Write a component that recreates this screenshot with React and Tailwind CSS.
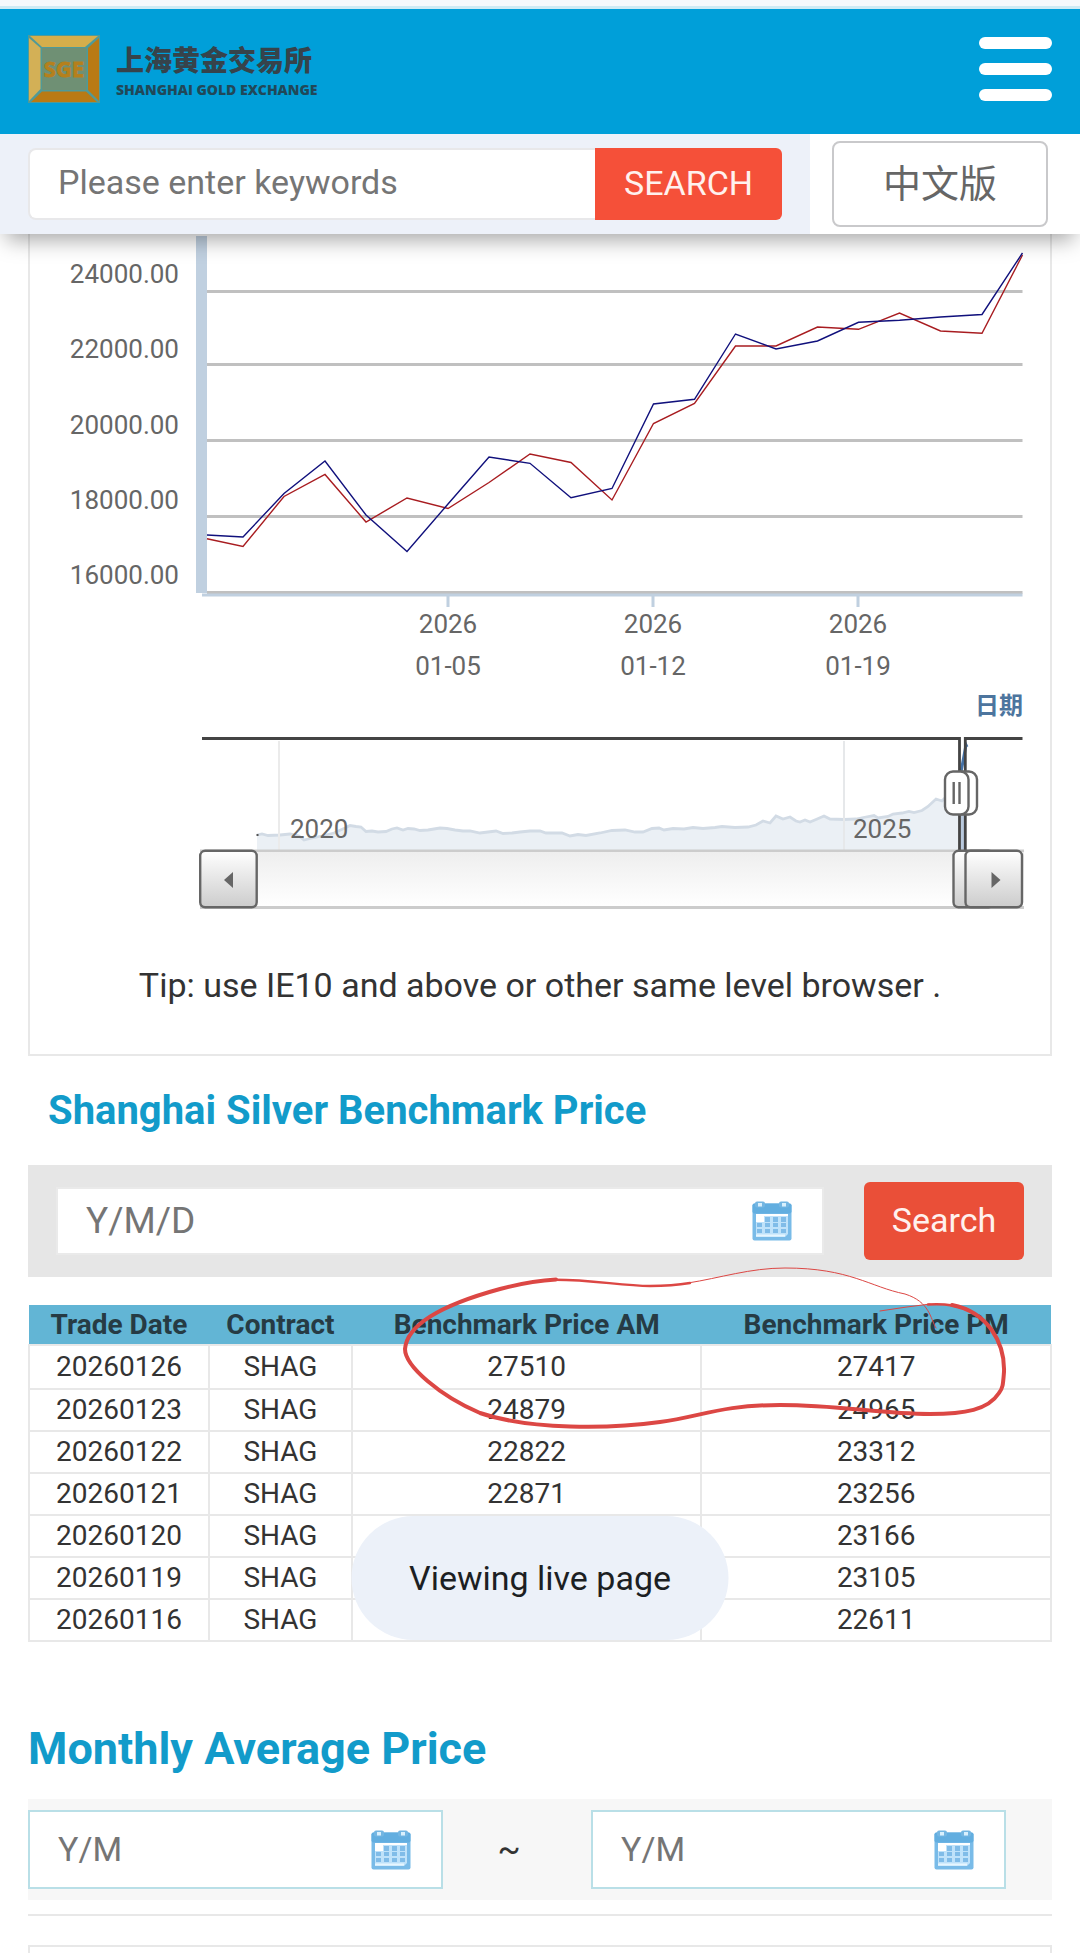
import React from 'react';

const AXIS_LABELS = [
  { text: '24000.00', y: 283, line: 291 },
  { text: '22000.00', y: 358, line: 364 },
  { text: '20000.00', y: 434, line: 440 },
  { text: '18000.00', y: 509, line: 516 },
  { text: '16000.00', y: 584, line: 592 },
];

const DATE_TICKS = [
  { x: 448, year: '2026', day: '01-05' },
  { x: 653, year: '2026', day: '01-12' },
  { x: 858, year: '2026', day: '01-19' },
];

const PM_POINTS =
  '207,535 243,537 284,493.5 325,461 366,515 407,551.5 448,504 489,457 530,463.3 571,497.7 612,488.5 653.5,404 694.5,399.3 735.5,334 776,349 817.5,341 858.5,322.3 899.5,320.3 940.5,317 982,314.5 1022.5,253';
const AM_POINTS =
  '207,538.7 243,546.5 284,496.5 325,474.5 366,522 407,498 448,508.5 489,482.5 530,454 571,462.5 612,500 653.5,423.5 694.5,403.5 735.5,346 776,346 817.5,327 858.5,329.3 899.5,313 940.5,331 982,333.3 1022.5,255';
const HISTORY_POINTS =
  '257,835 262,834 268,835.5 280,835 290,834 299,836 304,840 312,838 322,836 334,833 345,828 350,825.5 356,826.5 361,827 366,831.5 372,831 378,832 386,831.5 392,829 397,828 403,830 408,828.5 414,829 420,830.5 428,830 434,829 440,828 447,828.5 455,830 463,831 470,831 480,833 488,832 496,831 503,833.5 512,833 520,832 530,831 540,831 546,833 562,833 570,836 578,834.5 586,835.5 600,833 612,830.5 625,830 635,832 643,832 652,828.5 659,828 664,830 673,828.5 684,829 693,827.5 703,828.5 715,827.5 722,826.5 735,827.5 748,827 756,825 763,821 770,823 776,816 783,819 790,817 796,821 800,822 805,820 810,822 816,819.5 824,816 830,819 844,819.5 856,819 866,817 874,815.5 878,818 888,816.5 893,814 902,813 909,811.5 914,812.5 922,810.5 928,806.5 936,799 942,801 947,796 953,793 958,788';

const ROWS = [
  ['20260126', 'SHAG', '27510', '27417'],
  ['20260123', 'SHAG', '24879', '24965'],
  ['20260122', 'SHAG', '22822', '23312'],
  ['20260121', 'SHAG', '22871', '23256'],
  ['20260120', 'SHAG', '', '23166'],
  ['20260119', 'SHAG', '', '23105'],
  ['20260116', 'SHAG', '', '22611'],
];

export default function App() {
  return (
    <div className="bg-white font-['Roboto','Noto_Sans_CJK_SC',sans-serif] text-[#333]">
      <Header />
      <main className="px-7">
        <section className="border-x-2 border-b-2 border-[#e8e8e8] pb-[49px]">
          <PriceChart />
          <p className="text-center text-[34px] leading-10">
            Tip: use IE10 and above or other same level browser .
          </p>
        </section>

        <h2 className="mt-[31px] px-5 text-[40px] leading-[48px] font-bold text-[#129bca]">
          Shanghai Silver Benchmark Price
        </h2>
        <form className="mt-[30px] flex h-28 items-center gap-10 bg-[#e6e6e6] px-7">
          <DateField
            label="Trade date"
            placeholder="Y/M/D"
            frame="h-[68px] border-[#eaeaea] pl-7"
            text="text-[37px]"
          />
          <button
            type="button"
            className="h-[78px] w-40 shrink-0 rounded-md bg-[#ea4f38] pb-[2px] text-[34px] text-[#fff1ee]"
          >
            Search
          </button>
        </form>

        <BenchmarkTable />

        <h2 className="mt-[81px] text-[45px] leading-[52px] font-bold text-[#129bca]">Monthly Average Price</h2>
        <form className="mt-6 flex items-center bg-[#f7f7f7] py-[11px] pr-[46px]">
          <DateField
            label="From month"
            placeholder="Y/M"
            frame="h-[79px] border-[#b9dfe7] pl-7"
            text="text-[34px]"
          />
          <span className="w-[148px] shrink-0 pr-4 text-center text-[34px]">~</span>
          <DateField
            label="To month"
            placeholder="Y/M"
            frame="h-[79px] border-[#b9dfe7] pl-7"
            text="text-[34px]"
          />
        </form>
        <hr className="mt-[14px] border-t-2 border-[#e8e8e8]" />
        <div className="mt-[29px] h-2 border-2 border-b-0 border-[#e8e8e8]" />
      </main>
    </div>
  );
}

function Header() {
  return (
    <header className="relative z-10 bg-white shadow-[0_12px_20px_-6px_rgba(0,0,0,0.35)]">
      <div className="h-[9px] border-b-[3px] border-[#cdebf5] bg-[#f5f9fc]" />
      <div className="flex h-[125px] items-center justify-between bg-[#009fd9] px-7 pb-[6px]">
        <a href="#home" aria-label="Shanghai Gold Exchange" className="flex items-center gap-4 text-[#36434b]">
          <LogoMark />
          <span className="flex flex-col">
            <span className="font-['Noto_Sans_CJK_SC',sans-serif] text-[28px] leading-[42px] font-black">
              上海黄金交易所
            </span>
            <span className="font-['Open_Sans',sans-serif] text-[14px] leading-5 font-extrabold text-[#204858]">
              SHANGHAI GOLD EXCHANGE
            </span>
          </span>
        </a>
        <button type="button" aria-label="Menu" className="flex w-[73px] flex-col gap-[14px]">
          <span className="h-3 w-full rounded-md bg-white" />
          <span className="h-3 w-full rounded-md bg-white" />
          <span className="h-3 w-full rounded-md bg-white" />
        </button>
      </div>
      <div className="flex h-[100px]">
        <form className="flex min-w-0 flex-1 items-center bg-[#edf1f9] px-7">
          <input
            type="text"
            aria-label="Keywords"
            placeholder="Please enter keywords"
            className="h-[72px] min-w-0 flex-1 rounded-l-lg border-2 border-r-0 border-[#e8e8ea] bg-white px-7 pb-1 text-[34px] placeholder:text-[#757575]"
          />
          <button
            type="button"
            className="h-[72px] w-[187px] rounded-r-md bg-[#f55039] pb-[2px] text-[34px] text-[#fff1ee]"
          >
            SEARCH
          </button>
        </form>
        <div className="flex w-[270px] shrink-0 items-center pr-8 pl-[22px]">
          <a
            href="#zh"
            className="flex h-[86px] w-full items-center justify-center rounded-lg border-2 border-[#c9c9cb] text-[38px] text-[#666]"
          >
            中文版
          </a>
        </div>
      </div>
    </header>
  );
}

function LogoMark() {
  return (
    <svg viewBox="0 0 72 68" className="h-[68px] w-[72px]">
      <rect width="72" height="68" fill="#4f9a98" />
      <path d="M2 1H70L57 12H14Z" fill="#d5ae4b" />
      <path d="M1 3L12.500 13V54L1 66Z" fill="#d3b056" />
      <path d="M71 3V66L60 55V13Z" fill="#b97a14" />
      <path d="M3 67L14 56.500H58L69 67Z" fill="#b97a14" />
      <rect x="14" y="13" width="44.500" height="42" fill="#6f9074" />
      <text
        x="36"
        y="41.500"
        textAnchor="middle"
        className="font-['Liberation_Sans_Narrow','Open_Sans',sans-serif] text-[22px] font-bold"
        fill="#b5801c"
        stroke="#b5801c"
        strokeWidth="0.800"
      >
        SGE
      </text>
    </svg>
  );
}

function PriceChart() {
  return (
    <svg viewBox="30 234 1020 731" className="block h-auto w-full text-[26px]" fill="#666">
      <defs>
        <linearGradient id="button-fill" x1="0" y1="0" x2="0" y2="1">
          <stop offset="0" stopColor="#fff" />
          <stop offset="1" stopColor="#ccc" />
        </linearGradient>
        <linearGradient id="track-fill" x1="0" y1="0" x2="0" y2="1">
          <stop offset="0" stopColor="#eee" />
          <stop offset="1" stopColor="#fff" />
        </linearGradient>
      </defs>

      {AXIS_LABELS.map((l) => (
        <g key={l.text}>
          <text x="179" y={l.y} textAnchor="end">
            {l.text}
          </text>
          <rect x="207" y={l.line - 1} width="815.500" height="3" fill="#c0c0c0" />
        </g>
      ))}
      <rect x="202" y="593.500" width="820.500" height="3" fill="#c0d0e0" />
      <rect x="196" y="236" width="11" height="357" fill="#c0d0e0" />
      {DATE_TICKS.map((t) => (
        <g key={t.day} textAnchor="middle">
          <rect x={t.x - 1.5} y="596" width="3" height="11" fill="#c0d0e0" />
          <text x={t.x} y="633">
            {t.year}
          </text>
          <text x={t.x} y="675">
            {t.day}
          </text>
        </g>
      ))}
      <polyline points={AM_POINTS} fill="none" stroke="#a81c20" strokeWidth="1.400" />
      <polyline points={PM_POINTS} fill="none" stroke="#10107c" strokeWidth="1.400" />
      <text x="1023" y="714" textAnchor="end" className="text-[24px] font-bold" fill="#4d759e">
        日期
      </text>

      {/* history navigator */}
      <polygon points={`${HISTORY_POINTS} 958,850 257,850`} fill="#ebf0f5" />
      <polyline points={HISTORY_POINTS} fill="none" stroke="#d2dbe5" strokeWidth="2.800" />
      <rect x="256.500" y="834" width="2" height="2" fill="#555" />
      <rect x="961" y="772" width="4" height="78" fill="#b9c9dd" />
      <path d="M961 772L966 745L967 747" fill="none" stroke="#4572a7" strokeWidth="3" />
      <rect x="278" y="741" width="2" height="109" fill="#ebebeb" />
      <rect x="843" y="741" width="2" height="109" fill="#e6e8ea" />
      <text x="290" y="838">2020</text>
      <text x="853" y="838">2025</text>

      <rect x="200" y="849.500" width="824" height="59.500" fill="#ccc" />
      <rect x="200" y="852" width="824" height="54" fill="url(#track-fill)" />
      <path d="M202 738.500H959.500V851M965.300 851V738.500H1022.500" fill="none" stroke="#444" strokeWidth="2.800" />
      <g stroke="#666" strokeWidth="2.400">
        <rect x="953.500" y="850.800" width="40" height="56.500" rx="5" fill="url(#button-fill)" />
        <rect x="200.200" y="850.800" width="56.500" height="56.500" rx="5" fill="url(#button-fill)" />
        <rect x="965.500" y="850.800" width="56.500" height="56.500" rx="5" fill="url(#button-fill)" />
        <rect x="953.500" y="771.500" width="23.500" height="43" rx="8" fill="#fff" />
        <rect x="945" y="771.500" width="23.500" height="43" rx="8" fill="#fff" />
        <path d="M953.700 782V804M959.500 782V804" />
      </g>
      <path d="M224 880L233 872V888Z" />
      <path d="M1000.500 880L991.500 872V888Z" />
    </svg>
  );
}

function DateField({ label, placeholder, frame, text }) {
  return (
    <div className={`flex min-w-0 flex-1 items-center border-2 bg-white pr-[30px] ${frame}`}>
      <input
        type="text"
        aria-label={label}
        placeholder={placeholder}
        className={`min-w-0 flex-1 bg-transparent placeholder:text-[#757575] ${text}`}
      />
      <button type="button" aria-label={`Pick ${label.toLowerCase()}`}>
        <CalendarIcon />
      </button>
    </div>
  );
}

function CalendarIcon() {
  return (
    <svg viewBox="0 0 40 40" className="block size-10">
      <rect x="0.500" y="2.500" width="39" height="37" rx="2" fill="#79bbe8" />
      <rect x="0.500" y="2.500" width="39" height="10" rx="2" fill="#62aee0" />
      <rect x="3" y="0.500" width="10" height="6" rx="2" fill="#74b6e2" />
      <rect x="27" y="0.500" width="10" height="6" rx="2" fill="#74b6e2" />
      <rect x="6" y="2" width="4" height="3.500" fill="#d9f0fd" />
      <rect x="30" y="2" width="4" height="3.500" fill="#d9f0fd" />
      <path d="M4 13H36V33L33 36H4Z" fill="#bfe2fa" />
      <path d="M4 13H36V15H12V21H4Z" fill="#fff" />
      <path d="M4 34.500H33" stroke="#e6f6ff" strokeWidth="2" />
      <g fill="#80bce8">
        <rect x="13" y="16" width="5" height="5" />
        <rect x="21" y="16" width="5" height="5" />
        <rect x="29" y="16" width="5" height="5" />
        <rect x="5" y="22" width="5" height="4" />
        <rect x="13" y="22" width="5" height="4" />
        <rect x="21" y="22" width="5" height="4" />
        <rect x="29" y="22" width="5" height="4" />
        <rect x="5" y="28" width="5" height="4" />
        <rect x="13" y="28" width="5" height="4" />
        <rect x="21" y="28" width="5" height="4" />
        <rect x="29" y="28" width="5" height="4" />
      </g>
    </svg>
  );
}

function BenchmarkTable() {
  return (
    <div className="relative mt-7">
      <table className="w-full table-fixed border-collapse text-center text-[28px] leading-8">
        <colgroup>
          <col className="w-[17.6%]" />
          <col className="w-[14%]" />
          <col className="w-[34.2%]" />
          <col className="w-[34.2%]" />
        </colgroup>
        <thead>
          <tr className="h-10 bg-[#62b5d5] text-[#263b44]">
            <th className="font-bold">Trade Date</th>
            <th className="font-bold">Contract</th>
            <th className="font-bold">Benchmark Price AM</th>
            <th className="font-bold">Benchmark Price PM</th>
          </tr>
        </thead>
        <tbody>
          {ROWS.map((row) => (
            <tr key={row[0]} className="h-[42px] first:h-11">
              {row.map((cell, i) => (
                <td key={i} className="border-2 border-[#e8e8e8]">
                  {cell}
                </td>
              ))}
            </tr>
          ))}
        </tbody>
      </table>
      <PenMark />
      <div
        role="status"
        className="absolute bottom-[2px] left-1/2 flex h-[124px] w-[377px] -translate-x-1/2 items-center justify-center rounded-full bg-[#ecf1f9] text-[34px] text-[#1c1f23]"
      >
        Viewing live page
      </div>
    </div>
  );
}

// hand-drawn circle round the two latest fixings
function PenMark() {
  return (
    <svg
      viewBox="28 1305 1024 337"
      className="pointer-events-none absolute inset-0 h-full w-full overflow-visible"
      fill="none"
      stroke="#dc4744"
      strokeLinecap="round"
    >
      <path d="M880 1311Q905 1307 930 1304" strokeWidth="1" />
      <path d="M928 1304.500Q950 1303 966 1309" strokeWidth="2.600" />
      <path
        d="M952 1305C988 1312 1005 1343 1004 1372C1003 1384 1003 1388 999 1393C988 1410 965 1414 930 1414C880 1414 840 1405 780 1405C720 1405 700 1417 660 1422C610 1429 530 1430 480 1413C440 1396 405 1366 405 1349C407 1324 445 1304 500 1289Q530 1281 556 1279.500"
        strokeWidth="4"
      />
      <path d="M550 1279.800C590 1279 620 1286 650 1286Q672 1286 690 1283" strokeWidth="2.400" />
      <path d="M688 1283C720 1278 750 1268 785 1268C850 1268 870 1287 905 1294C930 1302 930 1318 936 1328" strokeWidth="1" />
    </svg>
  );
}
